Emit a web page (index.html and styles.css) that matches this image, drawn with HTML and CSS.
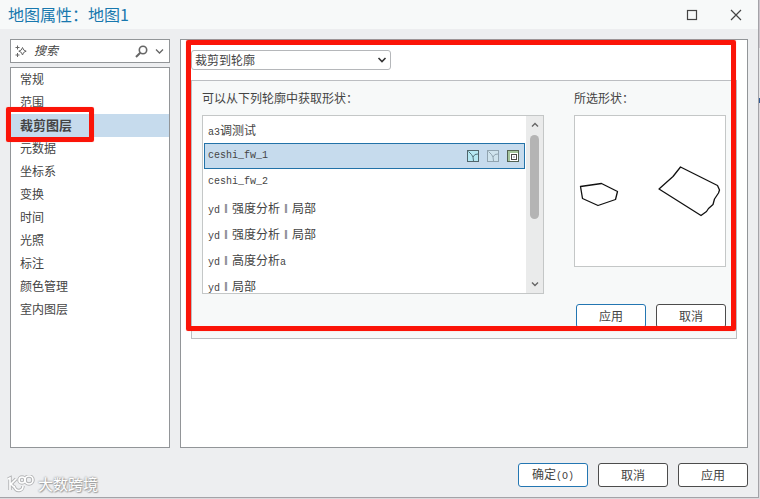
FILE: index.html
```html
<!DOCTYPE html>
<html lang="zh-CN">
<head>
<meta charset="utf-8">
<title>地图属性</title>
<link rel="stylesheet" href="styles.css">
</head>
<body>
<div class="window">
  <header class="titlebar">
    <h1>地图属性：地图1</h1>
    <div class="window-controls">
      <button type="button" aria-label="最大化"><svg width="12" height="12" viewBox="0 0 12 12"><rect x="1.500" y="1.500" width="9" height="9"/></svg></button>
      <button type="button" aria-label="关闭"><svg width="12" height="12" viewBox="0 0 12 12"><path d="M1 1L11 11M11 1L1 11"/></svg></button>
    </div>
  </header>

  <div class="body">
    <aside class="sidebar">
      <div class="search">
        <svg class="sparkle" width="12" height="12" viewBox="0 0 12 12"><path d="M7.500 2.500L8.700 5L11.200 6.200L8.700 7.400L7.500 10L6.300 7.400L3.800 6.200L6.300 5Z"/><path d="M2.500 0.500V4.500M0.500 2.500H4.500M2.500 8V12M0.500 10H4.500"/></svg>
        <input type="search" aria-label="搜索" placeholder="搜索">
        <button type="button" aria-label="搜索"><svg width="13" height="13" viewBox="0 0 13 13"><circle cx="8" cy="5" r="3.700" stroke-width="1.600"/><path d="M5.300 7.700L1 12" stroke-width="2"/></svg></button>
        <button type="button" aria-label="搜索选项"><svg width="9" height="13" viewBox="0 0 9 13"><path d="M1 4.500L4.500 8L8 4.500" stroke-width="1.300"/></svg></button>
      </div>
      <nav class="pages">
        <a href="#">常规</a>
        <a href="#">范围</a>
        <a href="#" class="current">裁剪图层</a>
        <a href="#">元数据</a>
        <a href="#">坐标系</a>
        <a href="#">变换</a>
        <a href="#">时间</a>
        <a href="#">光照</a>
        <a href="#">标注</a>
        <a href="#">颜色管理</a>
        <a href="#">室内图层</a>
      </nav>
      <div class="mark mark-page"></div>
    </aside>

    <main class="content">
      <div class="clip-mode">
        <select aria-label="裁剪方式"><option>裁剪到轮廓</option></select>
        <svg width="10" height="8" viewBox="0 0 10 8"><path d="M1.500 2L5 5.500L8.500 2"/></svg>
      </div>
      <section class="group">
        <div class="columns">
          <div class="source">
            <h2>可以从下列轮廓中获取形状：</h2>
            <div class="listbox">
              <ul>
                <li><span class="latin">a3</span>调测试</li>
                <li class="selected"><span class="latin">ceshi_fw_1</span>
                  <span class="tools">
                    <button type="button" aria-label="可见范围"><svg width="12" height="12" viewBox="0 0 12 12"><rect x="0.500" y="0.500" width="11" height="11" fill="#b5e8f2" stroke="#50666c"/><path d="M1.500 1.500L4.500 4.500L6 7L6.500 11M6 7L8 4.500L11 4" fill="none" stroke="#507079"/></svg></button>
                    <button type="button" aria-label="所选范围"><svg width="12" height="12" viewBox="0 0 12 12"><rect x="0.500" y="0.500" width="11" height="11" fill="#cfe3ed" stroke="#91a4b0"/><path d="M1.500 1.500L4.500 4.500L6 7L6.500 11M6 7L8 4.500L11 4" fill="none" stroke="#91a4b0"/></svg></button>
                    <button type="button" aria-label="全部范围"><svg width="12" height="12" viewBox="0 0 12 12"><rect x="0.500" y="0.500" width="11" height="11" fill="#a5c59d" stroke="#536253"/><rect x="3" y="3" width="8" height="8" fill="#fff"/><rect x="4.500" y="4.500" width="5" height="5" fill="#fff" stroke="#484848"/><rect x="6" y="6" width="2" height="2" fill="#c5c5d0"/></svg></button>
                  </span>
                </li>
                <li><span class="latin">ceshi_fw_2</span></li>
                <li><span class="latin">yd</span><span class="divider">‖</span>强度分析<span class="divider">‖</span>局部</li>
                <li><span class="latin">yd</span><span class="divider">‖</span>强度分析<span class="divider">‖</span>局部</li>
                <li><span class="latin">yd</span><span class="divider">‖</span>高度分析<span class="latin">a</span></li>
                <li><span class="latin">yd</span><span class="divider">‖</span>局部</li>
              </ul>
              <div class="scrollbar">
                <svg width="8" height="6" viewBox="0 0 8 6"><path d="M1 4.500L4 1.500L7 4.500"/></svg>
                <div class="track"><div class="thumb"></div></div>
                <svg width="8" height="6" viewBox="0 0 8 6"><path d="M1 1.500L4 4.500L7 1.500"/></svg>
              </div>
            </div>
          </div>
          <div class="preview">
            <h2>所选形状：</h2>
            <div class="canvas">
              <svg viewBox="0 0 150 150"><path d="M5.500 70.500L26.500 67.500L42.500 75.500L40.500 83.500L23 89.500L7.500 82.500Z"/><path d="M105.500 51L142.500 69.500L144.500 74L143.500 77L139.500 83L138 88.500L133.500 92.500L131.500 95.500L126 99.500L84 73L98 60.500Z"/></svg>
            </div>
          </div>
        </div>
        <div class="actions">
          <button type="button" class="button primary">应用</button>
          <button type="button" class="button">取消</button>
        </div>
      </section>
      <div class="mark mark-group"></div>
    </main>
  </div>

  <footer class="footer">
    <button type="button" class="button primary">确定<span class="latin">(O)</span></button>
    <button type="button" class="button">取消</button>
    <button type="button" class="button">应用</button>
  </footer>

  <div class="watermark">
    <svg width="28" height="18" viewBox="0 0 28 18"><g class="halo"><path d="M1 4L3 3V15M9 4L4 9L8 13M7 11C9 18 16 16 16 11"/><circle cx="15" cy="5" r="3"/><circle cx="22" cy="5" r="4"/></g><g class="line"><path d="M1 4L3 3V15M9 4L4 9L8 13M7 11C9 18 16 16 16 11"/><circle cx="15" cy="5" r="3"/><circle cx="22" cy="5" r="4"/></g></svg>
    <span>大数跨境</span>
  </div>
</div>
</body>
</html>
```
FILE: styles.css
```css
* { box-sizing: border-box; }

body {
  margin: 0;
  padding: 0 1px 1px 0;
  background: linear-gradient(#ccc5cc 48px, #e4e4e6 48px, #e4e4e6 98px, #315a94 98px, #315a94 103px, #dcd8dc 103px);
  font-family: "Noto Sans CJK SC", sans-serif;
  font-size: 12px;
  line-height: 16px;
  color: #444;
}

button { font: inherit; color: inherit; }
a { color: inherit; text-decoration: none; }
h1, h2, ul { margin: 0; padding: 0; font-weight: normal; }
svg { display: block; flex: none; fill: none; }

.latin { font-family: "Liberation Mono", monospace; font-size: 10px; }
.divider {
  width: 12px;
  text-align: center;
  font-family: "Liberation Serif", serif;
}

.window {
  position: relative;
  display: flex;
  flex-direction: column;
  min-height: calc(100vh - 1px);
  background: #edeef0;
  border: solid #a4a3a8;
  border-width: 0 1px 1px 0;
}

.titlebar {
  display: flex;
  align-items: center;
  justify-content: space-between;
  height: 29px;
  padding: 0 16px 0 8px;
  background: #f7f9f9;
}
.titlebar h1 { padding-bottom: 2px; font-size: 16px; line-height: 24px; color: #1878ae; }
.window-controls { display: flex; gap: 32px; }
.window-controls button { padding: 0; border: 0; background: none; }
.window-controls svg { stroke: #444; stroke-width: 1.2; }

.body {
  flex: 1;
  display: flex;
  gap: 10px;
  padding: 10px 10px 0;
}

.sidebar {
  position: relative;
  flex: none;
  width: 160px;
  display: flex;
  flex-direction: column;
  gap: 4px;
}
.search {
  display: flex;
  align-items: center;
  gap: 7px;
  height: 24px;
  padding: 0 5px 0 4px;
  background: #fff;
  border: 1px solid #929598;
}
.search input {
  flex: 1;
  min-width: 0;
  padding: 0 0 2px;
  border: 0;
  background: none;
  font: inherit;
}
.search input::placeholder { color: #444; font-style: italic; opacity: 1; }
.search button { padding: 0; border: 0; background: none; }
.search svg { stroke: #666; }
.sparkle { stroke-width: 1; }

.pages {
  flex: 1;
  background: #fff;
  border: 1px solid #929598;
}
.pages a { display: block; padding: 0 0 2px 9px; line-height: 21px; }
.pages .current { background: #c6dbed; font-size: 13px; font-weight: bold; }

.content {
  position: relative;
  flex: 1;
  min-width: 0;
  padding: 10px;
  background: #fff;
  border: 1px solid #929598;
}

.clip-mode { position: relative; width: 200px; }
.clip-mode select {
  display: block;
  appearance: none;
  width: 100%;
  height: 20px;
  padding: 0 20px 0 3px;
  border: 1px solid #b5b7ba;
  border-radius: 3px;
  background: #fff;
  font: inherit;
  color: inherit;
}
.clip-mode svg {
  position: absolute;
  top: 6px;
  right: 4px;
  stroke: #333;
  stroke-width: 1.6;
  pointer-events: none;
}

.group {
  margin-top: 10px;
  padding: 8px 10px 10px;
  background: #f7f9f9;
  border: 1px solid #bcbec2;
}
.group h2 { margin-bottom: 9px; font-size: 12px; line-height: 17px; }
.columns { display: flex; gap: 30px; }
.source { flex: 1; min-width: 0; }

.listbox {
  display: flex;
  height: 179px;
  overflow: hidden;
  background: #fff;
  border: 1px solid #c4c7c7;
}
.listbox ul { flex: 1; padding: 1px; list-style: none; }
.listbox li {
  display: flex;
  align-items: baseline;
  height: 26px;
  padding: 0 5px 0 3px;
  border: 1px solid transparent;
  line-height: 24px;
}
.listbox .selected { background: #c6dbed; border-color: #2272a8; }
.tools { display: flex; align-self: center; gap: 8px; margin-left: auto; }
.tools button { padding: 0; border: 0; background: none; }

.scrollbar {
  display: flex;
  flex-direction: column;
  align-items: center;
  width: 17px;
  padding: 6px 0;
  background: #eaebeb;
}
.scrollbar svg { stroke: #666; stroke-width: 1.4; }
.track { flex: 1; padding: 7px 0; }
.thumb { width: 9px; height: 84px; border-radius: 5px; background: #b4b4b4; }

.preview { flex: none; width: 152px; }
.canvas { background: #fff; border: 1px solid #c4c7c7; }
.canvas svg { width: 100%; stroke: #111; stroke-width: 1.3; stroke-linejoin: round; }

.actions { display: flex; justify-content: flex-end; gap: 10px; margin-top: 10px; }
.button {
  width: 70px;
  height: 24px;
  padding: 0;
  border: 1px solid #4c4c4c;
  border-radius: 3px;
  background: #fff;
}
.primary { border-color: #2376b2; }

.footer {
  display: flex;
  justify-content: flex-end;
  gap: 10px;
  padding: 15px 10px 10px;
}

.mark {
  position: absolute;
  border: 5px solid #fb1408;
  border-radius: 2px;
  box-shadow: 0 0 1px #fb8880;
  pointer-events: none;
}
.mark-page { top: 68px; left: -4px; width: 88px; height: 35px; }
.mark-group { top: 0; left: 5px; right: 11px; height: 291px; }

.watermark {
  position: absolute;
  left: 7px;
  bottom: 3px;
  display: flex;
  align-items: center;
  gap: 3px;
  color: #fff;
  font-size: 15px;
  line-height: 20px;
  text-shadow: 0 0 2px #999, 0 0 2px #999, 1px 1px 1px #aaa;
}
.halo { stroke: #b4b5b7; stroke-width: 3.5; }
.line { stroke: #fff; stroke-width: 1.6; }
```
